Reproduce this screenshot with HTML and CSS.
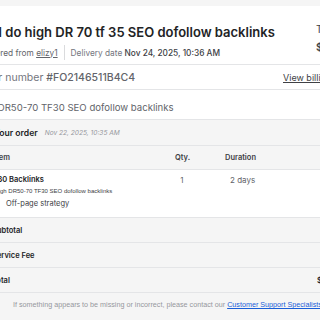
FILE: index.html
```html
<!DOCTYPE html>
<html>
<head>
<meta charset="utf-8">
<link rel="stylesheet" href="styles.css">
</head>
<body>
<div class="page">
  <div class="card">
    <div class="head">
      <div class="head-main">
        <h1 class="title">I will do high DR 70 tf 35 SEO dofollow backlinks</h1>
        <div class="meta">
          <span>Ordered from <a class="seller" href="#">elizy1</a></span>
          <span class="sep"></span>
          <span class="muted">Delivery date <span class="strong">Nov 24, 2025, 10:36 AM</span></span>
        </div>
      </div>
      <div class="head-side">
        <div class="side-label">Total price</div>
        <div class="side-value">$30</div>
      </div>
    </div>
    <div class="numrow">
      <span class="muted">Order number <span class="num">#FO2146511B4C4</span></span>
      <a class="billing" href="#">View billing history</a>
    </div>
    <div class="desc">High DR50-70 TF30 SEO dofollow backlinks</div>
    <div class="order">
      <div class="order-head"><span class="oh-title">Your order</span><span class="oh-date">Nov 22, 2025, 10:35 AM</span></div>
      <div class="grid th">
        <div>Item</div><div class="c">Qty.</div><div class="dh">Duration</div>
      </div>
      <div class="grid item">
        <div>
          <div class="pkg">30 Backlinks</div>
          <div class="pkg-sub">Get high DR50-70 TF30 SEO dofollow backlinks</div>
          <div class="feat"><svg class="chk" width="8" height="8" viewBox="0 0 8 8"><path d="M1 4.2 L3 6.2 L7 1.8" fill="none" stroke="#404145" stroke-width="1.2"/></svg><span>Off-page strategy</span></div>
        </div>
        <div class="c">1</div>
        <div class="dur">2 days</div>
      </div>
      <div class="sum"><span>Subtotal</span></div>
      <div class="sum"><span>Service Fee</span></div>
      <div class="sum"><span>Total</span><span class="amt">$30</span></div>
    </div>
  </div>
  <p class="foot">If something appears to be missing or incorrect, please contact our <a href="#">Customer Support Specialists</a>.</p>
</div>
</body>
</html>
```
FILE: styles.css
```css
html, body { margin: 0; padding: 0; }
body {
  background: #f5f5f5;
  width: 320px;
  height: 320px;
  overflow: hidden;
  font-family: Inter, "Open Sans", sans-serif;
  color: #222325;
}
.page {
  margin-left: -30px;
  width: 400px;
  padding-top: 6px;
}
.card {
  background: #fff;
  border-bottom: 1px solid #e4e5e7;
}
.head {
  display: flex;
  justify-content: space-between;
  padding: 18px 0 0 4px;
  height: 40px;
  border-bottom: 1px solid #e4e5e7;
}
.title {
  margin: 0;
  font-size: 13px;
  font-weight: 600;
  line-height: 16px;
}
.meta {
  display: flex;
  align-items: center;
  font-size: 8.3px;
  color: #62646a;
  margin-top: 5px;
  margin-left: 7px;
}
.seller { color: #62646a; text-decoration: underline; }
.sep {
  width: 1px;
  height: 15px;
  background: #dadbdd;
  margin: 0 6px;
}
.muted { color: #74767e; }
.strong { color: #404145; font-weight: 500; }
.head-side {
  width: 54px;
  font-size: 10px;
  color: #404145;
  margin-top: -1px;
}
.side-value { margin-top: 6px; font-weight: 600; }
.numrow {
  display: flex;
  justify-content: space-between;
  align-items: center;
  height: 24px;
  padding-left: 4px;
  font-size: 10.5px;
  border-bottom: 1px solid #e4e5e7;
}
.num { color: #62646a; font-weight: 500; }
.billing {
  color: #404145;
  font-size: 9px;
  text-decoration: underline;
  width: 87px;
  white-space: nowrap;
}
.desc {
  padding: 11px 0 0 4px;
  height: 18px;
  font-size: 9.6px;
  line-height: 13px;
  color: #62646a;
}
.order-head {
  background: #f5f5f5;
  height: 25px;
  display: flex;
  align-items: center;
  padding-left: 24px;
  border-top: 1px solid #e4e5e7;
  border-bottom: 1px solid #e4e5e7;
}
.oh-title { font-weight: 600; font-size: 8.6px; color: #222325; }
.oh-date { font-style: italic; font-size: 6.6px; color: #95979d; margin-left: 7px; }
.grid {
  display: grid;
  grid-template-columns: 181px 14px 1fr;
  padding-left: 24px;
}
.th {
  background: #f5f5f5;
  height: 23px;
  align-items: center;
  font-size: 7.5px;
  font-weight: 600;
  color: #404145;
  border-bottom: 1px solid #e4e5e7;
}
.c { text-align: center; }
.dh { padding-left: 36px; }
.item {
  padding-top: 5px;
  height: 42px;
  font-size: 8px;
  line-height: 10px;
  color: #62646a;
}
.pkg { font-weight: 600; font-size: 7.5px; color: #222325; margin-left: 3.5px; }
.pkg-sub {
  font-family: "Liberation Sans", Arial, sans-serif;
  font-size: 6px;
  line-height: 8px;
  color: #404145;
  margin-top: 2px;
  margin-left: -10px;
}
.feat { display: flex; align-items: center; font-size: 7.5px; color: #404145; margin-top: 4px; margin-left: -4px; }
.chk { margin-right: 8px; }
.dur { padding-left: 41px; }
.sum {
  background: #f5f5f5;
  height: 24px;
  display: flex;
  align-items: center;
  justify-content: space-between;
  padding-left: 22px;
  font-size: 7.5px;
  font-weight: 600;
  color: #222325;
  border-top: 1px solid #e4e5e7;
}
.amt { width: 53px; }
.foot {
  margin: 7px 0 0 43px;
  font-family: "Liberation Sans", Arial, sans-serif;
  font-size: 7.2px;
  color: #95979d;
  white-space: nowrap;
}
.foot a { color: #1a5ed8; }
```
